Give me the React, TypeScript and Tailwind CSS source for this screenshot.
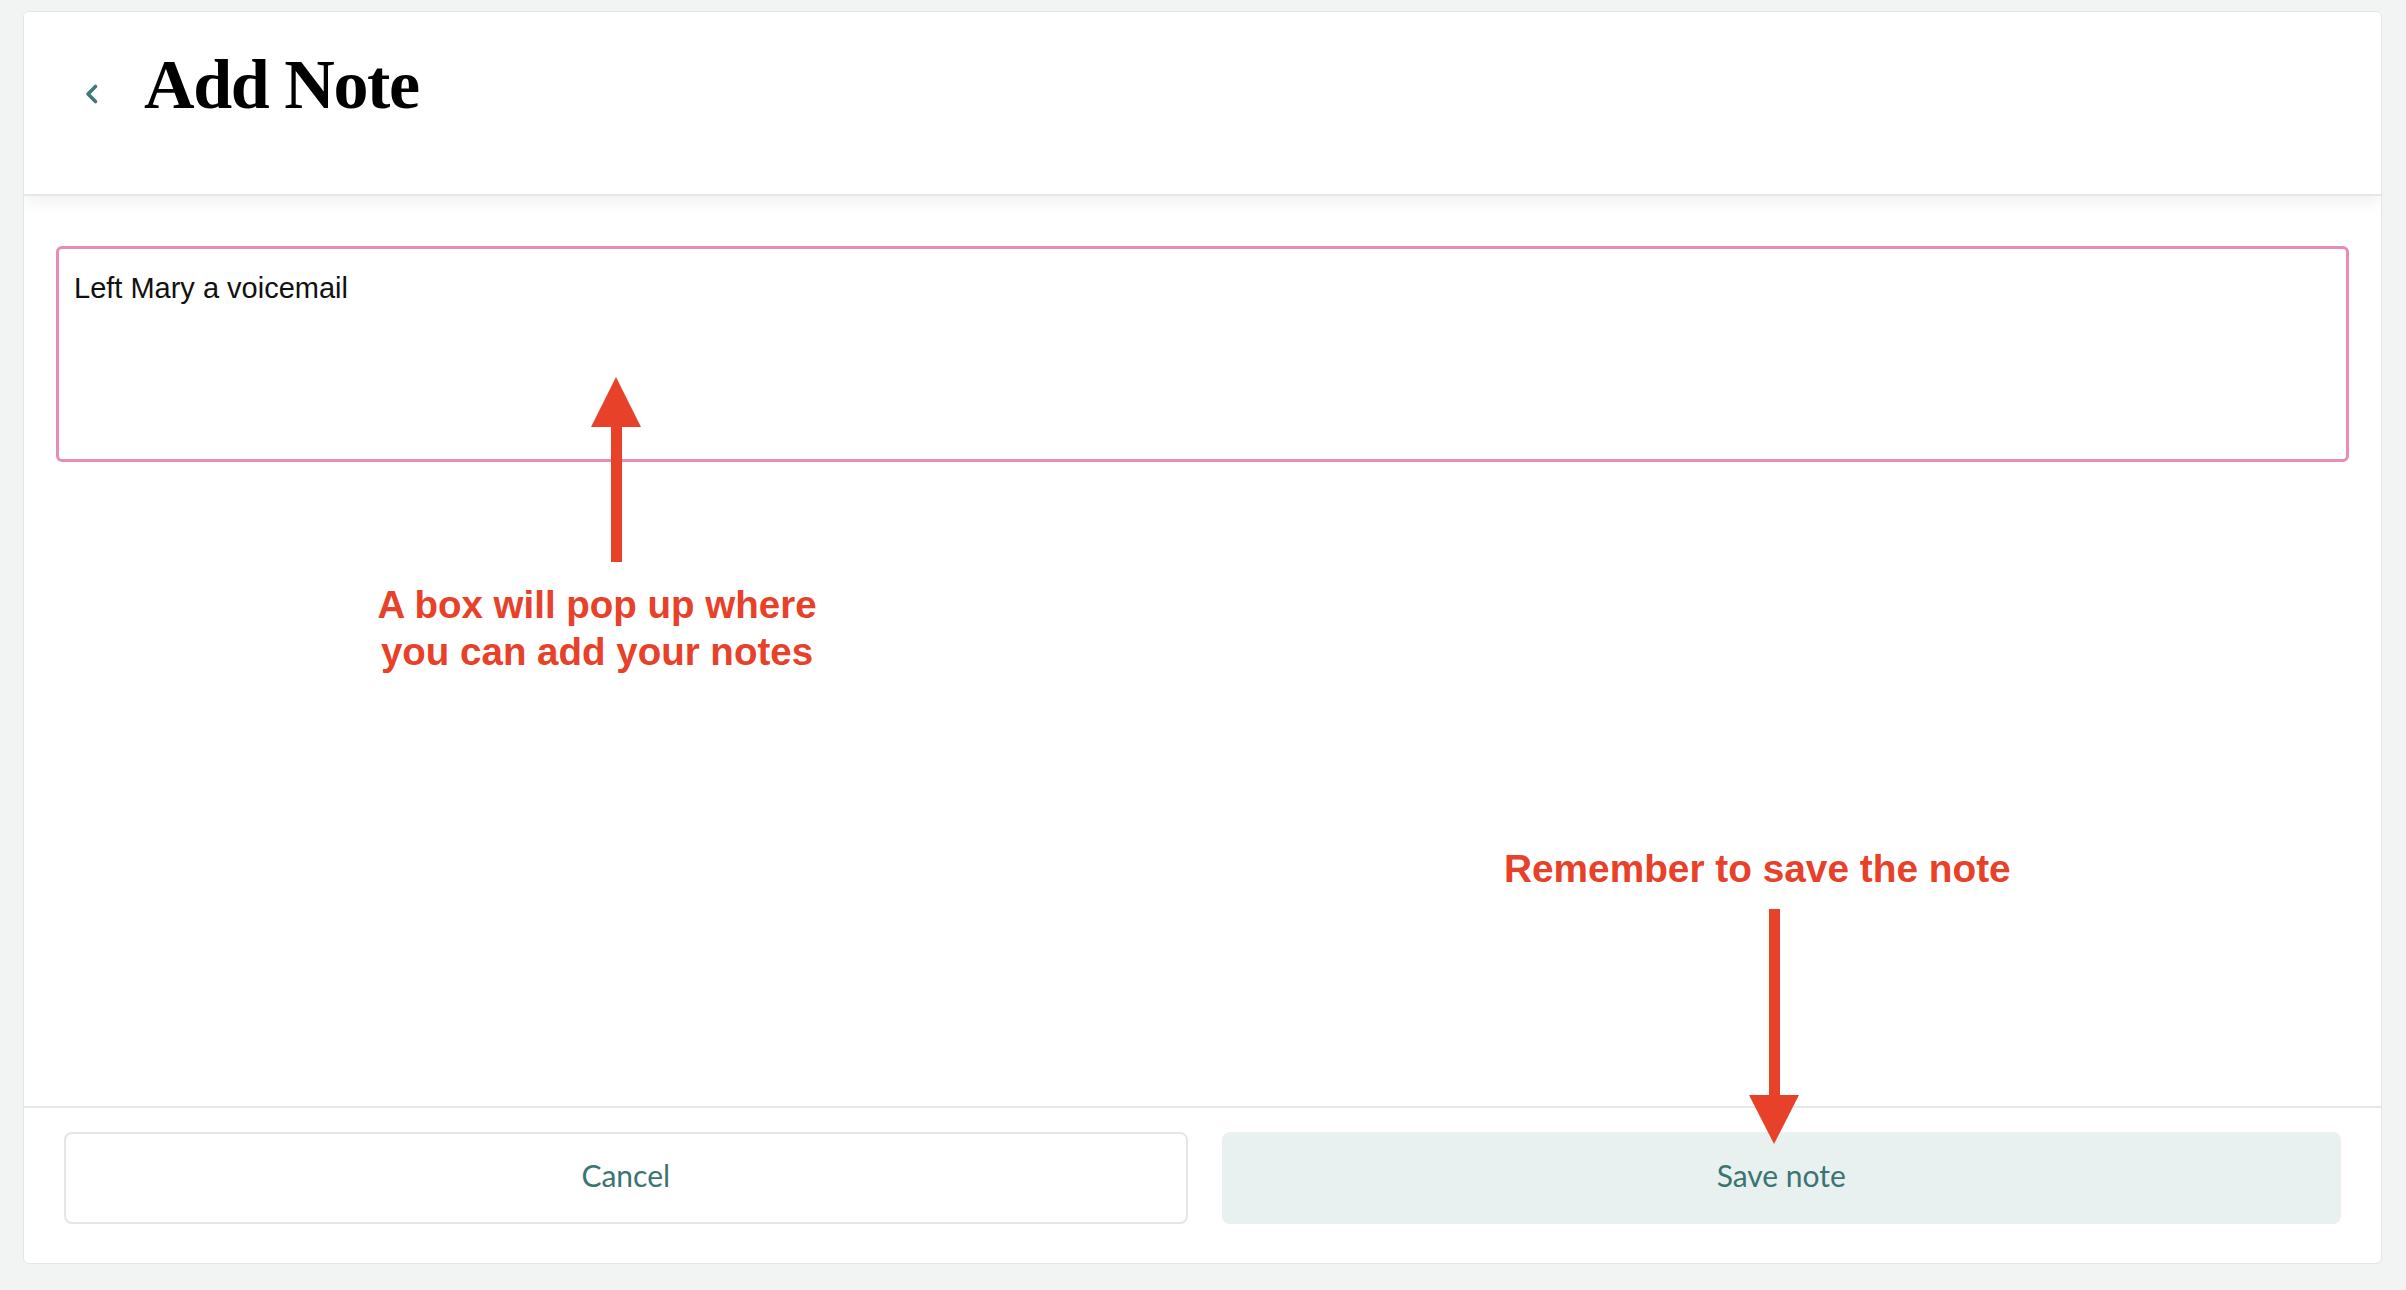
import React from 'react';

const RED = '#e8412a';

function BackChevron() {
  return (
    <svg width="20" height="24" viewBox="0 0 20 24" fill="none" className="mt-[32px] shrink-0">
      <path d="M14.5 4.5 L7 12 L14.5 19.5" stroke="#3d7a78" strokeWidth="3.6" strokeLinecap="round" strokeLinejoin="round" />
    </svg>
  );
}

export default function App() {
  return (
    <div className="relative h-[1290px] w-full overflow-hidden bg-[#f2f4f3] pt-[11px] pl-[23px] pr-[24px] pb-[26px]">
      <div className="flex h-full flex-col overflow-hidden rounded-[6px] border border-[#e4e6e6] bg-white">
        {/* Header */}
        <header className="relative z-10 flex h-[184px] shrink-0 items-start gap-[43px] border-b-2 border-[#e6e8e8] bg-white pl-[57px] pt-[38px] shadow-[0_6px_16px_rgba(0,0,0,0.06)]">
          <BackChevron />
          <h1 className="text-[70px] font-bold leading-[70px] tracking-[-0.02em] text-black [font-family:'Liberation_Serif',serif]">
            Add Note
          </h1>
        </header>

        {/* Body */}
        <main className="flex-1 px-[32px] pt-[50px]">
          <textarea
            defaultValue="Left Mary a voicemail"
            className="block h-[216px] w-full resize-none rounded-[6px] border-[3px] border-[#e88bb5] bg-white pl-[15px] pt-[22px] text-[29px] leading-[34px] text-[#111] outline-none [font-family:'Liberation_Sans',sans-serif]"
          />
        </main>

        {/* Footer */}
        <footer className="flex shrink-0 gap-[34px] border-t-2 border-[#e6e8e8] px-[40px] pt-[24px] pb-[39px] [font-family:Lato,sans-serif]">
          <button className="flex h-[92px] flex-1 items-center justify-center rounded-[8px] border-2 border-[#e6e6e6] bg-white pb-[5px] text-[30px] text-[#3b7471]">
            Cancel
          </button>
          <button className="flex h-[92px] flex-1 items-center justify-center rounded-[8px] bg-[#e8f1f0] pb-[5px] text-[30px] text-[#3b7471]">
            Save note
          </button>
        </footer>
      </div>

      {/* Annotations drawn over the screenshot */}
      <svg className="absolute left-[588px] top-[375px]" width="56" height="190" viewBox="588 375 56 190">
        <polygon points="616,377 641,427 591,427" fill={RED} />
        <rect x="611" y="425" width="11" height="137" fill={RED} />
      </svg>
      <div className="absolute left-[371px] top-[581px] w-[452px] text-center text-[38.5px] font-bold leading-[47px] [font-family:'Liberation_Sans',sans-serif]" style={{ color: RED }}>
        A box will pop up where
        <br />
        you can add your notes
      </div>

      <div className="absolute left-[1504px] top-[845px] whitespace-nowrap text-[38.8px] font-bold leading-[47px] [font-family:'Liberation_Sans',sans-serif]" style={{ color: RED }}>
        Remember to save the note
      </div>
      <svg className="absolute left-[1746px] top-[907px]" width="56" height="240" viewBox="1746 907 56 240">
        <rect x="1769" y="909" width="11" height="188" fill={RED} />
        <polygon points="1749,1095 1799,1095 1774,1144" fill={RED} />
      </svg>
    </div>
  );
}
